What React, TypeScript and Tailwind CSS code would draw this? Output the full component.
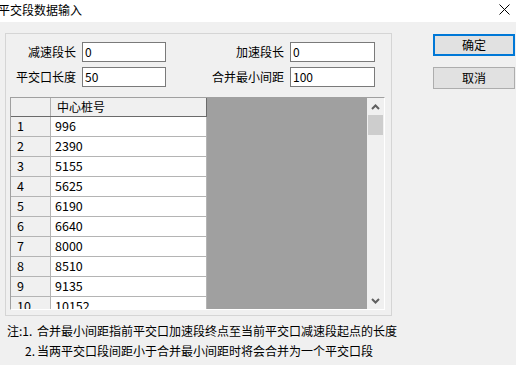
import React from "react";

const rows = ["996", "2390", "5155", "5625", "6190", "6640", "8000", "8510", "9135", "10152"];

function Field({ label, value, width, inputW }: { label: string; value: string; width: string; inputW: string }) {
  return (
    <div className={`flex items-center justify-end gap-[6px] ${width}`}>
      <span className="text-[12px] leading-none text-black">{label}</span>
      <div className={`${inputW} h-[20px] bg-white border border-[#7a7a7a] flex items-center pl-[2px] text-[12px] text-black`}>
        {value}
      </div>
    </div>
  );
}

export default function App() {
  return (
    <div
      className="w-[516px] h-[365px] bg-[#f0f0f0] overflow-hidden relative"
      style={{ fontFamily: '"Noto Sans CJK SC", "Noto Sans", sans-serif' }}
    >
      {/* title bar */}
      <div className="h-[22px] bg-white flex items-center justify-between">
        <span className="text-[12px] leading-none text-black -ml-[2px] -mt-[3px]">平交段数据输入</span>
        <svg width="11" height="11" viewBox="0 0 11 11" className="mr-[6px] -mt-[4px]">
          <path d="M0.5 0.5 L10.5 10.5 M10.5 0.5 L0.5 10.5" stroke="#000" strokeWidth="1" />
        </svg>
      </div>

      <div className="flex">
        {/* left */}
        <div className="pl-[5px] pt-[11px]">
          <div className="w-[387px] h-[283px] border border-[#d5d5d5]">
            <div className="mt-[8px] flex flex-col gap-[5px]">
              <div className="flex">
                <Field label="减速段长" value="0" width="w-[160px]" inputW="w-[84px]" />
                <Field label="加速段长" value="0" width="w-[209px]" inputW="w-[85px]" />
              </div>
              <div className="flex">
                <Field label="平交口长度" value="50" width="w-[160px]" inputW="w-[84px]" />
                <Field label="合并最小间距" value="100" width="w-[209px]" inputW="w-[85px]" />
              </div>
            </div>

            {/* grid */}
            <div className="ml-[4px] mt-[10px] w-[375px] h-[213px] border-t border-l border-[#a0a0a0] border-r border-b border-r-white border-b-white flex overflow-hidden">
              <div className="w-[356px] h-full flex bg-[#a0a0a0]">
                <div className="w-[196px] flex flex-col">
                  <div className="flex h-[20px] border-b border-[#6a6a6a]">
                    <div className="w-[40px] bg-[#f0f0f0] border-r border-[#b0b0b0]" />
                    <div className="w-[156px] bg-[#f0f0f0] border-r border-[#6a6a6a] flex items-center pl-[6px] text-[12px] text-black">
                      中心桩号
                    </div>
                  </div>
                  {rows.map((v, i) => (
                    <div key={i} className="flex h-[20px] shrink-0">
                      <div className="w-[40px] bg-[#f0f0f0] border-r border-b border-[#b4b4b4] flex items-center pl-[6px] text-[12.5px] text-black">
                        {i + 1}
                      </div>
                      <div className="w-[156px] bg-white border-r border-b border-[#b4b4b4] flex items-center pl-[4px] text-[12.5px] text-black">
                        {v}
                      </div>
                    </div>
                  ))}
                </div>
              </div>
              {/* scrollbar */}
              <div className="w-[17px] h-full bg-[#f0f0f0] flex flex-col">
                <div className="h-[17px] flex items-center justify-center">
                  <svg width="9" height="6" viewBox="0 0 9 6">
                    <path d="M1 5 L4.5 1.5 L8 5" stroke="#606060" strokeWidth="2" fill="none" />
                  </svg>
                </div>
                <div className="h-[20px] mx-[1px] bg-[#cdcdcd]" />
                <div className="flex-1" />
                <div className="h-[17px] flex items-center justify-center">
                  <svg width="9" height="6" viewBox="0 0 9 6">
                    <path d="M1 1 L4.5 4.5 L8 1" stroke="#606060" strokeWidth="2" fill="none" />
                  </svg>
                </div>
              </div>
            </div>
          </div>

          {/* notes */}
          <div className="mt-[5px] ml-[2px] text-[12px] text-black">
            <div className="h-[20px] flex items-center whitespace-nowrap">
              <span>注</span>
              <span className="inline-block w-[18px]">:1.</span>
              <span>合并最小间距指前平交口加速段终点至当前平交口减速段起点的长度</span>
            </div>
            <div className="h-[20px] flex items-center whitespace-nowrap">
              <span className="inline-block w-[18px]" />
              <span className="inline-block w-[12px]">2.</span>
              <span>当两平交口段间距小于合并最小间距时将会合并为一个平交口段</span>
            </div>
          </div>
        </div>

        {/* buttons */}
        <div className="ml-[36px] pt-[12px] flex flex-col gap-[11px]">
          <div className="w-[82px] h-[22px] bg-[#e1e1e1] border-2 border-[#0078d7] flex items-center justify-center text-[12px] text-black">
            确定
          </div>
          <div className="w-[82px] h-[22px] bg-[#e1e1e1] border border-[#adadad] flex items-center justify-center text-[12px] text-black">
            取消
          </div>
        </div>
      </div>
    </div>
  );
}
